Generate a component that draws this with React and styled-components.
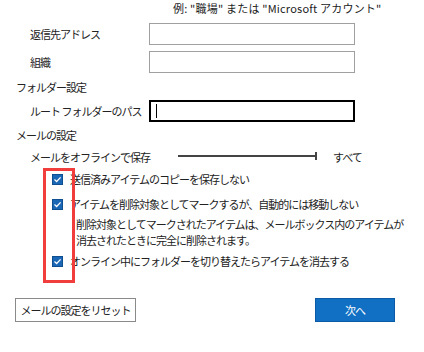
import React from "react";
import styled, { createGlobalStyle } from "styled-components";

const Global = createGlobalStyle`
  html, body { margin: 0; padding: 0; background: #fff; }
  body {
    font-family: "Noto Sans CJK JP", "Noto Sans", sans-serif;
    font-size: 11px;
    letter-spacing: -1px;
    color: #222;
  }
`;

const Page = styled.div`
  width: 424px;
  height: 352px;
  display: flex;
  flex-direction: column;
  box-sizing: border-box;
`;

const Hint = styled.div`
  height: 16px;
  line-height: 16px;
  padding-left: 173px;
  white-space: nowrap;
  letter-spacing: 0.2px;
`;

const FieldRow = styled.div`
  display: flex;
  align-items: center;
  margin-top: ${(p) => p.$top}px;
  height: 22px;
`;

const Label = styled.div`
  width: 149px;
  box-sizing: border-box;
  padding-left: 30px;
  white-space: nowrap;
  line-height: 16px;
`;

const Input = styled.div`
  width: 206px;
  height: 22px;
  box-sizing: border-box;
  border: ${(p) => (p.$focused ? "2px solid #000" : "1px solid #a0a0a0")};
  display: flex;
  align-items: center;
  padding-left: 5px;
`;

const Caret = styled.span`
  width: 1px;
  height: 14px;
  background: #000;
`;

const Section = styled.div`
  margin-top: ${(p) => p.$top}px;
  padding-left: 16px;
  line-height: 16px;
  height: 16px;
  white-space: nowrap;
`;

const SliderRow = styled.div`
  display: flex;
  align-items: center;
  margin-top: 6px;
  height: 16px;
`;

const SliderLabel = styled.div`
  width: 148px;
  box-sizing: border-box;
  padding-left: 30px;
  white-space: nowrap;
`;

const Track = styled.div`
  margin-left: 30px;
  width: 139px;
  height: 2px;
  background: #444;
  position: relative;
  margin-top: -3px;
  &::after {
    content: "";
    position: absolute;
    right: 0;
    top: -3px;
    width: 2px;
    height: 8px;
    background: #444;
  }
`;

const SliderValue = styled.div`
  margin-left: 16px;
`;

const Options = styled.div`
  position: relative;
  margin-top: 6px;
  display: flex;
  flex-direction: column;
`;

const Highlight = styled.div`
  position: absolute;
  left: 43px;
  top: -3px;
  width: 32px;
  height: 115px;
  box-sizing: border-box;
  border: 3px solid #f23d3d;
  pointer-events: none;
`;

const Option = styled.div`
  display: flex;
  align-items: center;
  height: 16px;
  margin-top: ${(p) => p.$top || 0}px;
  padding-left: 52px;
  white-space: nowrap;
`;

const Box = styled.span`
  width: 11px;
  height: 11px;
  box-sizing: border-box;
  background: #1a67b5;
  border: 1px solid #0e4f91;
  display: inline-flex;
  align-items: center;
  justify-content: center;
  margin-right: 7px;
  flex: none;
`;

const Desc = styled.div`
  padding-left: 76px;
  margin-top: 4px;
  line-height: 16px;
  white-space: nowrap;
`;

const Footer = styled.div`
  display: flex;
  justify-content: space-between;
  margin-top: 29px;
  padding: 0 29px 0 15px;
`;

const Button = styled.button`
  height: 24px;
  box-sizing: border-box;
  font-family: inherit;
  font-size: 11px;
  letter-spacing: -1px;
  padding: 0;
  cursor: pointer;
  border: 1px solid ${(p) => (p.$primary ? "#0b5aa6" : "#8a8a8a")};
  background: ${(p) => (p.$primary ? "#1170c4" : "#fff")};
  color: ${(p) => (p.$primary ? "#fff" : "#222")};
  width: ${(p) => p.$w}px;
`;

const Check = () => (
  <Box>
    <svg width="9" height="9" viewBox="0 0 9 9">
      <path d="M1.5 4.6 L3.6 6.5 L7.6 2.4" fill="none" stroke="#fff" strokeWidth="1.3" />
    </svg>
  </Box>
);

export default function App() {
  return (
    <Page>
      <Global />
      <Hint>例: "職場" または "Microsoft アカウント"</Hint>
      <FieldRow $top={7}>
        <Label>返信先アドレス</Label>
        <Input />
      </FieldRow>
      <FieldRow $top={6}>
        <Label>組織</Label>
        <Input />
      </FieldRow>
      <Section $top={6}>フォルダー設定</Section>
      <FieldRow $top={5}>
        <Label>ルート フォルダーのパス</Label>
        <Input $focused>
          <Caret />
        </Input>
      </FieldRow>
      <Section $top={5}>メールの設定</Section>
      <SliderRow>
        <SliderLabel>メールをオフラインで保存</SliderLabel>
        <Track />
        <SliderValue>すべて</SliderValue>
      </SliderRow>
      <Options>
        <Highlight />
        <Option>
          <Check />
          送信済みアイテムのコピーを保存しない
        </Option>
        <Option $top={9}>
          <Check />
          アイテムを削除対象としてマークするが、自動的には移動しない
        </Option>
        <Desc>
          削除対象としてマークされたアイテムは、メールボックス内のアイテムが
          <br />
          消去されたときに完全に削除されます。
        </Desc>
        <Option $top={5}>
          <Check />
          オンライン中にフォルダーを切り替えたらアイテムを消去する
        </Option>
      </Options>
      <Footer>
        <Button $w={121}>メールの設定をリセット</Button>
        <Button $primary $w={80}>次へ</Button>
      </Footer>
    </Page>
  );
}
